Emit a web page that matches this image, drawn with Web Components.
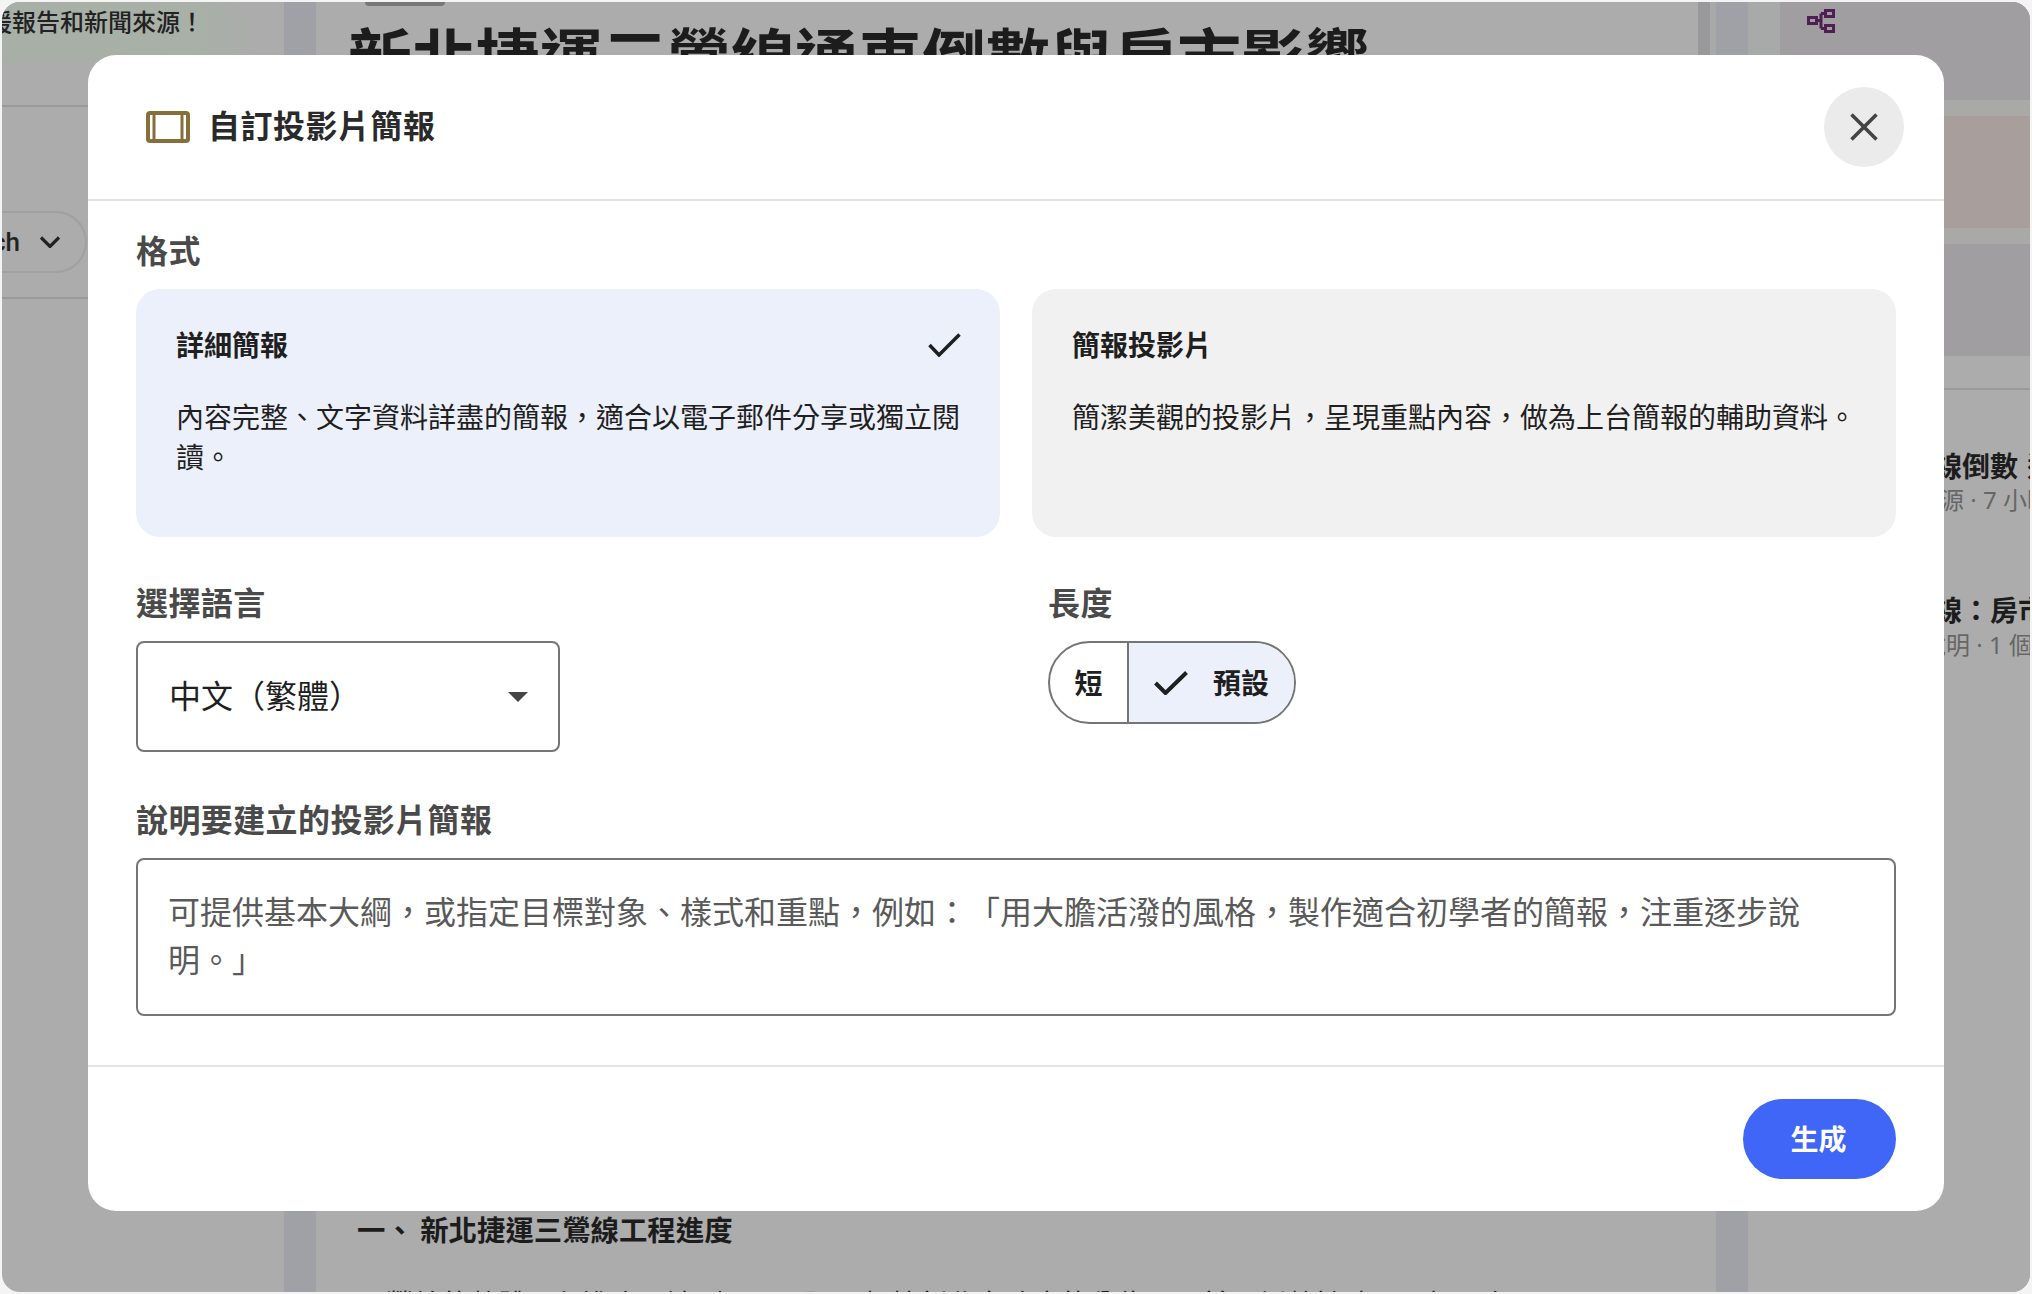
<!DOCTYPE html>
<html lang="zh-Hant">
<head>
<meta charset="utf-8">
<title>自訂投影片簡報</title>
<style>
html,body{margin:0;padding:0;background:#f4f4f4;font-family:"Noto Sans CJK TC","Noto Sans",sans-serif;}
body{width:2032px;height:1294px;overflow:hidden;}
</style>
</head>
<body>
<app-window>
  <page-backdrop></page-backdrop>
  <slide-dialog>
    <span slot="title">自訂投影片簡報</span>
    <field-label>格式</field-label>
    <div style="display:grid;grid-template-columns:864px 864px;gap:32px;margin-bottom:46px">
      <format-card selected heading="詳細簡報">內容完整、文字資料詳盡的簡報，適合以電子郵件分享或獨立閱讀。</format-card>
      <format-card heading="簡報投影片">簡潔美觀的投影片，呈現重點內容，做為上台簡報的輔助資料。</format-card>
    </div>
    <div style="display:grid;grid-template-columns:864px 864px;gap:32px;margin-bottom:48px;height:169px">
      <div>
        <field-label>選擇語言</field-label>
        <lang-select>中文（繁體）</lang-select>
      </div>
      <div style="padding-left:16px">
        <field-label>長度</field-label>
        <length-toggle></length-toggle>
      </div>
    </div>
    <field-label>說明要建立的投影片簡報</field-label>
    <prompt-box>可提供基本大綱，或指定目標對象、樣式和重點，例如：「用大膽活潑的風格，製作適合初學者的簡報，注重逐步說明。」</prompt-box>
    <primary-button slot="footer">生成</primary-button>
  </slide-dialog>
</app-window>
<script>
const FONT='"Noto Sans CJK TC","Noto Sans",sans-serif';
function def(name,html,init){
  customElements.define(name,class extends HTMLElement{
    constructor(){super();const r=this.attachShadow({mode:'open'});r.innerHTML=html;}
    connectedCallback(){if(init)init(this);}
  });
}
def('app-window',`<style>
:host{display:block;position:relative;box-sizing:border-box;width:2028px;height:1290px;margin:2px;border-radius:18px;overflow:hidden;background:#acacac;font-family:${FONT};text-spacing-trim:space-all;}
</style><slot></slot>`);

def('page-backdrop',`<style>
:host{display:grid;grid-template-columns:282px 32px 1382px 12px 6px 32px 32px 250px;height:1290px;background:#acacac;color:#1c1c1c;}
.col{overflow:hidden;min-width:0;height:1290px;}
.notice{height:68px;background:linear-gradient(rgba(172,172,172,0) 80%,#acacac),linear-gradient(90deg,#a7afa6 0%,#a8b0a7 70%,#acacac 90%);box-sizing:border-box;}
.notice span{display:block;margin-left:-14px;font-size:24px;line-height:37px;font-weight:500;white-space:nowrap;color:#222;}
.rule{height:2px;background:#9a9a9a;margin-top:35px;width:86px;}
.pill{display:flex;align-items:center;justify-content:flex-end;box-sizing:border-box;width:85px;height:62px;margin-top:104px;border:2px solid #a0a0a0;border-left:0;border-radius:0 31px 31px 0;padding-right:25px;gap:20px;font:500 26px "Roboto",sans-serif;color:#222;}
.pill span,.pill svg{flex:none;}
.rule2{height:2px;background:#9a9a9a;margin-top:24px;width:86px;}
.bar{background:#a0a1a7;}
.dark{background:linear-gradient(#99999c 0,#99999c 200px,#acacac 200px);}
.pale{background:linear-gradient(#a8a9a9 0,#a8a9a9 200px,#acacac 200px);}
.main{display:flex;flex-direction:column;padding-left:32px;box-sizing:border-box;}
.stub{width:80px;height:4px;background:#777;border-radius:0 0 4px 4px;margin-left:17px;flex:none;}
h1{margin:0;font-size:63.800px;line-height:96px;font-weight:700;white-space:nowrap;color:#1c1c1c;flex:none;}
.sp{flex:1;}
h2{margin:0 0 0 9px;font-size:28.400px;line-height:40px;font-weight:700;white-space:nowrap;flex:none;}
p{margin:34px 0 0 9px;font-size:28.200px;line-height:40px;white-space:nowrap;height:9px;flex:none;}
.badge{display:inline-block;width:32px;height:32px;border-radius:50%;background:#9c9c9c;vertical-align:middle;margin:0 8px;}
.right{background:#acacac;}
.b{height:98px;background:#a09ea1;position:relative;}
.b svg{position:absolute;left:27px;top:7px;}
.c{height:16px;background:#a9a9a7;}
.d{height:112px;background:#a89f9d;}
.e{height:112px;background:#a09ea1;}
.hr{height:2px;background:#9a9a9a;margin-top:32px;}
.t1{font-size:28px;line-height:37px;font-weight:700;white-space:nowrap;word-spacing:3px;}
.t2{font-family:"Noto Sans","Noto Sans CJK TC",sans-serif;font-size:24px;line-height:32px;white-space:nowrap;color:#666;}
</style>
<div class="col">
  <div class="notice"><span>援報告和新聞來源！</span></div>
  <div class="rule"></div>
  <div class="pill"><span>ch</span><svg width="20" height="12" viewBox="0 0 20 12"><path d="M1 1.500l9 9 9-9" fill="none" stroke="#222" stroke-width="3.200"/></svg></div>
  <div class="rule2"></div>
</div>
<div class="bar"></div>
<div class="col main">
  <div class="stub"></div>
  <h1>新北捷運三鶯線通車倒數與房市影響</h1>
  <div class="sp"></div>
  <h2>一、 新北捷運三鶯線工程進度</h2>
  <p>三鶯線的整體工程進度已達到 95%<span class="badge"></span>。根據新北市政府的公佈，目前正倒數計時，目標是在 2025</p>
</div>
<div class="dark"></div>
<div class="pale"></div>
<div class="bar"></div>
<div class="pale"></div>
<div class="col right">
  <div class="b"><svg width="28" height="24" viewBox="0 0 28 24" fill="none" stroke="#4d1f52" stroke-width="3"><rect x="1.500" y="8.500" width="8" height="6"/><rect x="18.500" y="1.500" width="8" height="6"/><rect x="18.500" y="16.500" width="8" height="6"/><path d="M10 11.500h4M14 4.500v15M14 4.500h4M14 19.500h4"/></svg></div>
  <div class="c"></div><div class="d"></div><div class="c"></div><div class="e"></div>
  <div class="hr"></div>
  <div class="t1" style="margin-top:57px;padding-left:42px">新北三鶯線倒數 通車</div>
  <div class="t2" style="padding-left:136px">來源 · 7 小時</div>
  <div class="t1" style="margin-top:75px;padding-left:42px">新北三鶯線：房市</div>
  <div class="t2" style="padding:2px 0 0 142px;line-height:30px">說明 · 1 個來源</div>
</div>`);

def('slide-dialog',`<style>
:host{display:flex;flex-direction:column;position:absolute;left:86px;top:53px;width:1856px;height:1156px;background:#fff;border-radius:28px;overflow:hidden;color:#1f1f1f;}
header{display:flex;align-items:center;box-sizing:border-box;height:146px;padding:0 40px 0 58px;border-bottom:2px solid #e3e3e3;flex:none;}
.title{flex:1;margin:0 0 7px 18px;font-size:32px;line-height:40px;font-weight:700;color:#2a2a2a;letter-spacing:.5px;}
.close{width:80px;height:80px;border-radius:50%;background:#ebebeb;display:flex;align-items:center;justify-content:center;}
main{flex:1;padding:30px 48px 0;box-sizing:border-box;min-height:0;}
footer{flex:none;display:flex;justify-content:flex-end;box-sizing:border-box;height:146px;padding:32px 48px;border-top:2px solid #e3e3e3;}
</style>
<header>
  <svg width="44" height="32" viewBox="0 0 44 32" fill="none" stroke="#85703c"><rect x="2" y="2" width="40" height="28" rx="2" stroke-width="4"/><path d="M8 3v26M36 3v26" stroke-width="3"/></svg>
  <span class="title"><slot name="title"></slot></span>
  <div class="close"><svg width="28" height="28" viewBox="0 0 28 28"><path d="M1.500 1.500l25 25M26.500 1.500l-25 25" fill="none" stroke="#444" stroke-width="3.600"/></svg></div>
</header>
<main><slot></slot></main>
<footer><slot name="footer"></slot></footer>`);

def('field-label',`<style>
:host{display:block;font-size:32px;line-height:36px;height:40px;margin-bottom:18px;font-weight:700;color:#4a4a4a;letter-spacing:.4px;}
</style><slot></slot>`);

def('format-card',`<style>
:host{display:block;box-sizing:border-box;height:248px;border-radius:24px;background:#f1f1f1;padding:35px 35px 0 40px;}
:host([selected]){background:#ecf0fa;}
.row{display:flex;justify-content:space-between;align-items:center;height:40px;margin-bottom:32px;}
.h{font-size:28px;line-height:40px;font-weight:700;color:#1f1f1f;}
svg{margin:2px 4px 0 0;display:none;}
:host([selected]) svg{display:block;}
.d{font-size:28px;line-height:40px;color:#1f1f1f;}
</style>
<div class="row"><span class="h"></span><svg width="33" height="24" viewBox="0 0 33 24"><path d="M1.500 12L11 22 31.500 1.500" fill="none" stroke="#1f1f1f" stroke-width="3.500"/></svg></div>
<div class="d"><slot></slot></div>`,el=>{el.shadowRoot.querySelector('.h').textContent=el.getAttribute('heading')||'';});

def('lang-select',`<style>
:host{display:flex;align-items:center;justify-content:space-between;box-sizing:border-box;width:424px;height:111px;border:2px solid #757575;border-radius:8px;padding:0 30px 0 31px;font-size:32px;color:#1f1f1f;}
span{margin-bottom:5px;}
</style><span><slot></slot></span><svg width="20" height="10" viewBox="0 0 20 10"><path d="M0 0h20L10 10z" fill="#444"/></svg>`);

def('length-toggle',`<style>
:host{display:flex;box-sizing:border-box;width:248px;height:83px;border:2px solid #757575;border-radius:42px;overflow:hidden;font-size:28px;font-weight:700;color:#1f1f1f;}
.a{display:flex;align-items:center;justify-content:center;border-right:2px solid #757575;box-sizing:content-box;flex:none;width:77px;padding-bottom:2px;}
.b{flex:1;display:flex;align-items:center;background:#ecf0fa;padding-left:25px;gap:25px;}
.b span{margin-bottom:2px;}
</style>
<div class="a">短</div>
<div class="b"><svg width="34" height="24" viewBox="0 0 34 24"><path d="M1.500 12L11.500 22 32.500 1.500" fill="none" stroke="#1f1f1f" stroke-width="4"/></svg><span>預設</span></div>`);

def('prompt-box',`<style>
:host{display:block;box-sizing:border-box;height:158px;border:2px solid #757575;border-radius:8px;padding:26px 30px 0;font-size:32px;line-height:48px;color:#5a5a5a;}
</style><slot></slot>`);

def('primary-button',`<style>
:host{display:flex;align-items:center;justify-content:center;box-sizing:border-box;width:153px;height:80px;padding:0 2px 2px 0;border-radius:40px;background:#3f66f6;color:#fff;font-size:28px;font-weight:700;}
</style><slot></slot>`);
</script>
</body>
</html>
